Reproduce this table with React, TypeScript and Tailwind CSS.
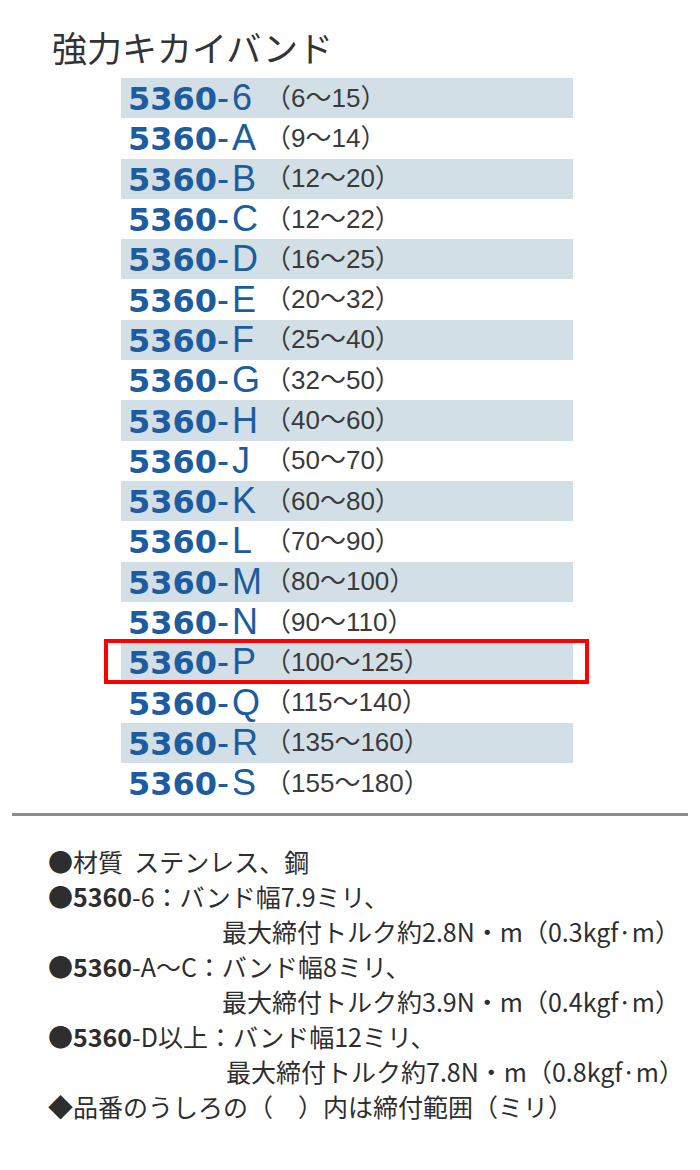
const rows = [
  { code: "6", range: "6～15" },
  { code: "A", range: "9～14" },
  { code: "B", range: "12～20" },
  { code: "C", range: "12～22" },
  { code: "D", range: "16～25" },
  { code: "E", range: "20～32" },
  { code: "F", range: "25～40" },
  { code: "G", range: "32～50" },
  { code: "H", range: "40～60" },
  { code: "J", range: "50～70" },
  { code: "K", range: "60～80" },
  { code: "L", range: "70～90" },
  { code: "M", range: "80～100" },
  { code: "N", range: "90～110" },
  { code: "P", range: "100～125", marked: true },
  { code: "Q", range: "115～140" },
  { code: "R", range: "135～160" },
  { code: "S", range: "155～180" },
];

const jp = "font-['Noto_Sans_CJK_JP',sans-serif]";

export default function App() {
  return (
    <div className="w-[700px] h-[1170px] bg-white overflow-hidden text-[#333]">
      {/* TITLE */}
      <div className={`pt-[23px] pl-[52px] h-[71px] text-[35px] leading-[48px] ${jp}`}>
        強力キカイバンド
      </div>

      {/* MODEL LIST */}
      <div className="mt-[7px] ml-[121px] w-[452px]">
        {rows.map((r, i) => (
          <div
            key={r.code}
            className={`relative flex items-center h-[40.3px] pl-[7px] ${
              i % 2 === 0 ? "bg-[#d3dfe7]" : ""
            }`}
          >
            <span className="w-[137px] shrink-0 text-[#1d5c9e] whitespace-nowrap">
              <span className="font-['DejaVu_Sans',sans-serif] font-bold text-[32px]">5360</span>
              <span className="font-['Liberation_Sans',sans-serif] text-[36px] tracking-[3px]">-{r.code}</span>
            </span>
            <span className="text-[26px] text-[#3a3a3a] whitespace-nowrap font-['Liberation_Sans','Noto_Sans_CJK_JP',sans-serif]">
              （{r.range}）
            </span>
            {r.marked && (
              <div className="absolute left-[-17px] top-[-3px] w-[485px] h-[45px] border-4 border-[#ff0000]" />
            )}
          </div>
        ))}
      </div>

      {/* DIVIDER */}
      <div className="mt-[10px] mx-[12px] h-[3px] bg-[#8c8c8c]" />

      {/* NOTES */}
      <div className={`mt-[28px] pl-[48px] text-[25px] leading-[35px] text-[#2e2e2e] ${jp}`}>
        <div>●材質&nbsp;&nbsp;ステンレス、鋼</div>
        <div>
          ●<span className="font-bold">5360</span>-6：バンド幅7.9ミリ、
        </div>
        <div className="pl-[174px]">最大締付トルク約2.8N・m（0.3kgf·m）</div>
        <div>
          ●<span className="font-bold">5360</span>-A～C：バンド幅8ミリ、
        </div>
        <div className="pl-[174px]">最大締付トルク約3.9N・m（0.4kgf·m）</div>
        <div>
          ●<span className="font-bold">5360</span>-D以上：バンド幅12ミリ、
        </div>
        <div className="pl-[178px]">最大締付トルク約7.8N・m（0.8kgf·m）</div>
        <div>◆品番のうしろの（　）内は締付範囲（ミリ）</div>
      </div>
    </div>
  );
}
